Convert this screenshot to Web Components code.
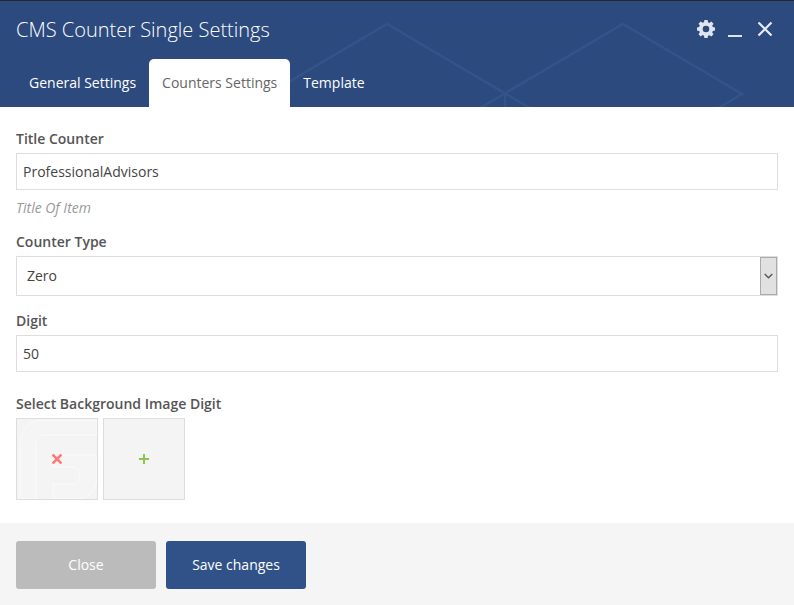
<!DOCTYPE html>
<html>
<head>
<meta charset="utf-8">
<title>CMS Counter Single Settings</title>
<style>
  html, body { margin: 0; padding: 0; background: #fff; }
  body { font-family: "Open Sans", "Liberation Sans", sans-serif; font-size: 14px; color: #555; }
</style>
</head>
<body>
<cms-dialog>
  <dialog-header slot="header" heading="CMS Counter Single Settings">
    <dialog-tab>General Settings</dialog-tab>
    <dialog-tab active>Counters Settings</dialog-tab>
    <dialog-tab>Template</dialog-tab>
  </dialog-header>

  <form-field label="Title Counter" hint="Title Of Item">
    <text-box>ProfessionalAdvisors</text-box>
  </form-field>
  <form-field label="Counter Type">
    <select-box>Zero</select-box>
  </form-field>
  <form-field label="Digit" gap="22">
    <text-box>50</text-box>
  </form-field>
  <form-field label="Select Background Image Digit">
    <div style="display:flex;gap:5px">
      <image-tile kind="remove"></image-tile>
      <image-tile kind="add"></image-tile>
    </div>
  </form-field>

  <dialog-button slot="footer" variant="close">Close</dialog-button>
  <dialog-button slot="footer" variant="save">Save changes</dialog-button>
</cms-dialog>

<script>
class CmsDialog extends HTMLElement {
  constructor() {
    super()
    this.attachShadow({ mode: 'open' }).innerHTML = `
      <style>
        :host { display: flex; flex-direction: column; width: 794px; height: 605px; overflow: hidden; }
        main { flex: 1; display: flex; flex-direction: column; padding: 22px 16px 0; background: #fff; }
        footer { height: 82px; box-sizing: border-box; padding: 18px 16px; display: flex; gap: 10px; background: #f5f5f5; }
      </style>
      <slot name="header"></slot>
      <main><slot></slot></main>
      <footer><slot name="footer"></slot></footer>`
  }
}

class DialogHeader extends HTMLElement {
  constructor() {
    super()
    this.attachShadow({ mode: 'open' }).innerHTML = `
      <style>
        :host { display: block; position: relative; height: 107px; box-sizing: border-box; background: #2c4a7e; border-top: 1px solid #23272e; overflow: hidden; }
        .pattern { position: absolute; left: 0; top: -1px; }
        .top { position: relative; display: flex; align-items: center; justify-content: space-between; height: 58px; padding: 0 21px 0 16px; }
        h1 { margin: 0; font-weight: 300; font-size: 20px; line-height: 58px; color: #fff; }
        .tools { display: flex; align-items: center; margin-bottom: 2px; }
        .tools svg { display: block; }
        nav { position: relative; display: flex; padding-left: 16px; }
      </style>
      <svg class="pattern" width="794" height="107" fill="none" stroke="#34538a" stroke-width="2.5">
        <path d="M150 164 387 24 530 108"/>
        <path d="M480 108 623 24 742 94 715 110"/>
        <path d="M505 93V108"/>
      </svg>
      <div class="top">
        <h1></h1>
        <div class="tools">
          <svg width="18" height="18" viewBox="0 0 18 18" style="margin-right:13px"><path fill="#dfe5f0" fill-rule="evenodd" d="M7.4 0h3.2l.4 2.3 1.4.6 1.9-1.3 2.2 2.2-1.3 1.9.6 1.4 2.2.4v3.1l-2.2.4-.6 1.4 1.3 1.9-2.2 2.2-1.9-1.3-1.4.6-.4 2.3H7.4L7 15.7l-1.4-.6-1.9 1.3-2.2-2.2 1.3-1.9-.6-1.4L0 10.5V7.4l2.2-.4.6-1.4L1.5 3.7l2.2-2.2 1.9 1.3L7 2.3zM9 5.7a3.3 3.3 0 1 0 0 6.6 3.3 3.3 0 0 0 0-6.6z"/></svg>
          <svg width="14" height="18" viewBox="0 0 14 18" style="margin-right:15px"><path fill="#dfe5f0" d="M0 15h14v2H0z"/></svg>
          <svg width="16" height="16" viewBox="0 0 16 16"><path stroke="#e6ebf4" stroke-width="2.2" fill="none" d="M1.5 1.5l13 13M14.5 1.5l-13 13"/></svg>
        </div>
      </div>
      <nav><slot></slot></nav>`
    this.shadowRoot.querySelector('h1').textContent = this.getAttribute('heading')
  }
}

class DialogTab extends HTMLElement {
  constructor() {
    super()
    this.attachShadow({ mode: 'open' }).innerHTML = `
      <style>
        :host { display: block; height: 48px; padding: 0 13px; line-height: 47px; font-size: 14px; color: #fff; border-radius: 5px 5px 0 0; }
        :host([active]) { background: #fff; color: #666; }
      </style>
      <slot></slot>`
  }
}

class FormField extends HTMLElement {
  constructor() {
    super()
    this.attachShadow({ mode: 'open' }).innerHTML = `
      <style>
        :host { display: block; margin-bottom: 15px; }
        label { display: block; font-size: 14px; font-weight: 600; line-height: 20px; color: #555; margin-bottom: 4px; }
        .hint { font-size: 14px; font-style: italic; line-height: 18px; color: #999; margin-top: 9px; }
      </style>
      <label></label>
      <slot></slot>
      <div class="hint"></div>`
    this.shadowRoot.querySelector('label').textContent = this.getAttribute('label')
    let hint = this.shadowRoot.querySelector('.hint')
    if (this.hasAttribute('hint')) hint.textContent = this.getAttribute('hint')
    else hint.remove()
    if (this.hasAttribute('gap')) this.style.marginBottom = this.getAttribute('gap') + 'px'
  }
}

class TextBox extends HTMLElement {
  constructor() {
    super()
    this.attachShadow({ mode: 'open' }).innerHTML = `
      <style>
        :host { display: block; height: 37px; box-sizing: border-box; border: 1px solid #ddd; padding: 0 6px; line-height: 35px; font-size: 14px; color: #444; background: #fff; }
      </style>
      <slot></slot>`
  }
}

class SelectBox extends HTMLElement {
  constructor() {
    super()
    this.attachShadow({ mode: 'open' }).innerHTML = `
      <style>
        :host { display: flex; height: 40px; box-sizing: border-box; border: 1px solid #ddd; padding-left: 10px; line-height: 38px; font-size: 14px; color: #444; background: #fff; }
        .value { flex: 1; }
        .arrow { width: 17px; box-sizing: border-box; margin: 0; border: 1px solid #aaa; background: #e1e1e1; display: flex; align-items: center; justify-content: center; }
      </style>
      <div class="value"><slot></slot></div>
      <div class="arrow"><svg width="9" height="6" viewBox="0 0 9 6"><path d="M.7 1l3.8 3.8L8.3 1" fill="none" stroke="#555" stroke-width="1.3"/></svg></div>`
  }
}

class ImageTile extends HTMLElement {
  constructor() {
    super()
    let remove = this.getAttribute('kind') == 'remove'
    // faint logo behind the remove mark, only on the filled tile
    let art = remove ? `<svg class="art" width="80" height="80"><path fill="#f5f5f5" stroke="#fbfbfb" d="M3 80V28Q3 3 24 1H80V16H26Q19 17 19 25V80Z"/><path fill="#f5f5f5" stroke="#fbfbfb" d="M36 80V65H55Q63 64 63 56Q63 49 55 48H36V36H80V60Q79 78 60 80Z"/></svg>` : ''
    let mark = remove
      ? `<svg class="mark" width="10" height="10" viewBox="0 0 10 10"><path d="M.5.5l9 9M9.5.5l-9 9" stroke="#ff7878" stroke-width="2.6" fill="none"/></svg>`
      : `<svg class="mark" width="10" height="10" viewBox="0 0 10 10"><path d="M5 0v10M0 5h10" stroke="#8cc84b" stroke-width="2" fill="none"/></svg>`
    this.attachShadow({ mode: 'open' }).innerHTML = `
      <style>
        :host { display: flex; position: relative; align-items: center; justify-content: center; width: 82px; height: 82px; box-sizing: border-box; border: 1px solid #ddd; background: #f4f4f4; }
        .art { position: absolute; left: 0; top: 0; }
        .mark { position: relative; display: block; }
      </style>
      ${art}${mark}`
  }
}

class DialogButton extends HTMLElement {
  constructor() {
    super()
    this.attachShadow({ mode: 'open' }).innerHTML = `
      <style>
        :host { display: block; width: 140px; height: 48px; border-radius: 3px; text-align: center; line-height: 47px; font-size: 14px; color: #fff; }
        :host([variant=close]) { background: #bbb; }
        :host([variant=save]) { background: #315288; }
      </style>
      <slot></slot>`
  }
}

customElements.define('cms-dialog', CmsDialog)
customElements.define('dialog-header', DialogHeader)
customElements.define('dialog-tab', DialogTab)
customElements.define('form-field', FormField)
customElements.define('text-box', TextBox)
customElements.define('select-box', SelectBox)
customElements.define('image-tile', ImageTile)
customElements.define('dialog-button', DialogButton)
</script>
</body>
</html>
